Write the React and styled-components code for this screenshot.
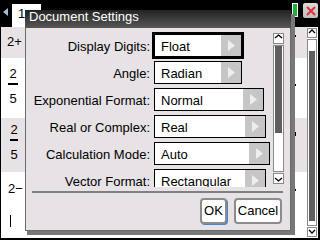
import React from 'react';
import styled, { createGlobalStyle } from 'styled-components';

const FONT = `"Liberation Sans", Arial, sans-serif`;

const Global = createGlobalStyle`
  html, body { margin: 0; padding: 0; background: #000; }
  body { font-family: ${FONT}; }
`;

const Screen = styled.div`
  position: relative;
  width: 320px;
  height: 240px;
  background: #000;
  display: flex;
  flex-direction: column;
  overflow: hidden;
  font-family: ${FONT};
  font-size: 13px;
  color: #000;
`;

const TopBar = styled.div`
  height: 27px;
  flex-shrink: 0;
  display: flex;
  align-items: flex-start;
`;

const BackArrow = styled.svg`
  display: block;
  margin: 8px 0 0 3px;
  width: 5px;
  height: 8px;
`;

const Tab = styled.div`
  margin: 4px 0 0 4px;
  height: 23px;
  box-sizing: border-box;
  padding: 3px 16px 0 6px;
  line-height: 14px;
  background: #fff;
`;

const Battery = styled.div`
  margin: 3px 0 0 auto;
  width: 6px;
  height: 14px;
  box-sizing: border-box;
  border: 1px solid #fff;
  background: #1cb23a;
`;

const CloseButton = styled.div`
  margin: 3px 2px 0 5px;
  width: 15px;
  height: 15px;
  border-radius: 2px;
  background: linear-gradient(#dadada, #bdbdbd);
  display: flex;
`;

const PageArea = styled.div`
  flex: 1;
  margin: 0 2px 2px 1px;
  background: #fff;
  display: flex;
`;

const Rows = styled.div`
  flex: 1;
  display: flex;
  flex-direction: column;
`;

const MathRow = styled.div`
  display: flex;
  align-items: flex-start;
  flex-shrink: 0;
  box-sizing: border-box;
  height: ${(p) => (p.$h ? `${p.$h}px` : 'auto')};
  flex-grow: ${(p) => (p.$h ? 0 : 1)};
  background: ${(p) => (p.$shade ? '#e6e2e6' : '#fff')};
  padding: ${(p) => p.$pt}px 0 0 ${(p) => p.$pl}px;
  line-height: 13px;
`;

const MathColumn = styled.div`
  display: flex;
  flex-direction: column;
  align-items: flex-start;
`;

const Fraction = styled.div`
  display: flex;
  flex-direction: column;
  align-items: center;
  width: ${(p) => p.$w}px;
`;

const Digit = styled.div`
  height: 13px;
  line-height: 13px;
`;

const FracBar = styled.div`
  align-self: stretch;
  height: 2px;
  background: #000;
  margin: 3px 0 7px;
`;

const Cursor = styled.div`
  width: 1px;
  height: 12px;
  background: #000;
  margin: 20px 0 0 2px;
`;

const Marker = styled.div`
  margin: ${(p) => p.$top}px 11px 0 auto;
  width: 1px;
  height: ${(p) => p.$h || 2}px;
  background: #000;
`;

const PageScroll = styled.div`
  width: 10px;
  margin-right: 1px;
  padding: 1px 0;
  display: flex;
  flex-direction: column;
  gap: 1px;
`;

const ScrollButton = styled.div`
  height: ${(p) => p.$h}px;
  box-sizing: border-box;
  border: 1px solid #8a8a8a;
  background: #fff;
  display: flex;
  flex-shrink: 0;
`;

const Track = styled.div`
  box-sizing: border-box;
  border: 1px solid #8a8a8a;
  background: #fff;
  display: flex;
  flex-direction: column;
  flex: ${(p) => (p.$h ? '0 0 auto' : 1)};
  height: ${(p) => (p.$h ? `${p.$h}px` : 'auto')};
  padding: 0 1px;
`;

const Thumb = styled.div`
  background: #5f5f5f;
  margin-top: ${(p) => p.$top}px;
  margin-bottom: ${(p) => p.$bottom || 0}px;
  height: ${(p) => (p.$h ? `${p.$h}px` : 'auto')};
  flex: ${(p) => (p.$h ? '0 0 auto' : 1)};
`;

const Dialog = styled.div`
  position: absolute;
  left: 25px;
  top: 10px;
  width: 266px;
  height: 221px;
  box-sizing: border-box;
  border: 1px solid #6b6b6b;
  border-top: none;
  background: #e6e2e6;
  box-shadow: 4px 4px 0 #787878, 2px 4px 0 #787878;
  display: flex;
  flex-direction: column;
`;

const TitleBar = styled.div`
  height: 18px;
  flex-shrink: 0;
  margin: 0 -1px;
  padding-left: 4px;
  background: linear-gradient(#222, #575757);
  color: #fff;
  line-height: 14px;
`;

const ScrollArea = styled.div`
  height: 159px;
  flex-shrink: 0;
  display: flex;
  overflow: hidden;
`;

const SettingsList = styled.div`
  flex: 1;
  padding-top: 6px;
  display: flex;
  flex-direction: column;
  gap: 4px;
`;

const SettingRow = styled.div`
  display: flex;
  align-items: baseline;
  height: 23px;
  flex-shrink: 0;
`;

const Label = styled.div`
  width: 124px;
  flex-shrink: 0;
  text-align: right;
  white-space: nowrap;
`;

const Select = styled.div`
  margin-left: 4px;
  width: ${(p) => p.$w}px;
  height: 23px;
  flex-shrink: 0;
  box-sizing: border-box;
  border: 1px solid #000;
  background: #fff;
  display: flex;
  box-shadow: ${(p) => (p.$focused ? '0 0 0 2px #000' : 'none')};
`;

const SelectText = styled.div`
  flex: 1;
  padding: 2px 0 0 6px;
  line-height: 19px;
  white-space: nowrap;
`;

const SelectArrow = styled.div`
  width: 20px;
  background: #c6c6c6;
  display: flex;
  align-items: center;
  justify-content: center;
`;

const DialogScroll = styled.div`
  width: 11px;
  margin: 5px 6px 0 0;
  display: flex;
  flex-direction: column;
  gap: 1px;
`;

const Separator = styled.div`
  height: 2px;
  flex-shrink: 0;
  margin: 4px 7px 0 6px;
  background: #808080;
`;

const ButtonRow = styled.div`
  margin-top: 5px;
  padding-right: 8px;
  display: flex;
  justify-content: flex-end;
  gap: 7px;
`;

const Button = styled.div`
  width: ${(p) => p.$w}px;
  height: 26px;
  box-sizing: border-box;
  border: 2px solid #8c8c8c;
  border-radius: 4px;
  background: #fff;
  text-align: center;
  line-height: 22px;
  box-shadow: ${(p) => (p.$primary ? '1px 1px 0 #3f86d0' : 'none')};
`;

const Chevron = ({ down, w, h, y }) => (
  <svg width={w} height={h} viewBox={`0 0 ${w} ${h}`} style={{ display: 'block' }}>
    {down ? (
      <polyline points={`1,${y} ${w / 2},${y + 3} ${w - 1},${y}`} fill="none" stroke="#000" strokeWidth="1.3" />
    ) : (
      <polyline points={`1,${y + 3} ${w / 2},${y} ${w - 1},${y + 3}`} fill="none" stroke="#000" strokeWidth="1.3" />
    )}
  </svg>
);

const ArrowTri = () => (
  <svg width="7" height="11" viewBox="0 0 7 11" style={{ display: 'block' }}>
    <polygon points="0,0 7,5.5 0,11" fill="#eeeeee" />
  </svg>
);

const settings = [
  { label: 'Display Digits:', value: 'Float', w: 88, focused: true },
  { label: 'Angle:', value: 'Radian', w: 88 },
  { label: 'Exponential Format:', value: 'Normal', w: 110 },
  { label: 'Real or Complex:', value: 'Real', w: 112 },
  { label: 'Calculation Mode:', value: 'Auto', w: 116 },
  { label: 'Vector Format:', value: 'Rectangular', w: 112 },
];

export default function App() {
  return (
    <>
      <Global />
      <Screen>
        <TopBar>
          <BackArrow viewBox="0 0 5 8">
            <polygon points="5,0 5,8 0,4" fill="#a9bbd2" />
          </BackArrow>
          <Tab>1</Tab>
          <Battery />
          <CloseButton>
            <svg width="15" height="15" viewBox="0 0 15 15" style={{ display: 'block' }}>
              <path d="M4 4 L12 12 M12 4 L4 12" stroke="#e2303a" strokeWidth="2" />
            </svg>
          </CloseButton>
        </TopBar>
        <PageArea>
          <Rows>
            <MathRow $h={31} $shade $pt={8} $pl={6}>
              <span>2+</span>
              <Marker $top={0} />
            </MathRow>
            <MathRow $h={60} $pt={9} $pl={7}>
              <Fraction $w={10}>
                <Digit>2</Digit>
                <FracBar />
                <Digit>5</Digit>
              </Fraction>
              <Marker $top={17} />
            </MathRow>
            <MathRow $h={54} $shade $pt={5} $pl={9}>
              <Fraction $w={8}>
                <Digit>2</Digit>
                <FracBar />
                <Digit>5</Digit>
              </Fraction>
              <Marker $top={9} $h={4} />
            </MathRow>
            <MathRow $pt={10} $pl={7}>
              <MathColumn>
                <span>2−</span>
                <Cursor />
              </MathColumn>
              <Marker $top={7} />
            </MathRow>
          </Rows>
          <PageScroll>
            <ScrollButton $h={10}>
              <Chevron w={8} h={8} y={1} />
            </ScrollButton>
            <Track>
              <Thumb $top={11} $bottom={4} />
            </Track>
            <ScrollButton $h={10}>
              <Chevron down w={8} h={8} y={2} />
            </ScrollButton>
          </PageScroll>
        </PageArea>

        <Dialog>
          <TitleBar>Document Settings</TitleBar>
          <ScrollArea>
            <SettingsList>
              {settings.map((s) => (
                <SettingRow key={s.label}>
                  <Label>{s.label}</Label>
                  <Select $w={s.w} $focused={s.focused}>
                    <SelectText>{s.value}</SelectText>
                    <SelectArrow>
                      <ArrowTri />
                    </SelectArrow>
                  </Select>
                </SettingRow>
              ))}
            </SettingsList>
            <DialogScroll>
              <ScrollButton $h={11}>
                <Chevron w={9} h={9} y={1} />
              </ScrollButton>
              <Track $h={127}>
                <Thumb $top={0} $h={87} />
              </Track>
              <ScrollButton $h={11}>
                <Chevron down w={9} h={9} y={4} />
              </ScrollButton>
            </DialogScroll>
          </ScrollArea>
          <Separator />
          <ButtonRow>
            <Button $w={27} $primary>OK</Button>
            <Button $w={48}>Cancel</Button>
          </ButtonRow>
        </Dialog>
      </Screen>
    </>
  );
}
